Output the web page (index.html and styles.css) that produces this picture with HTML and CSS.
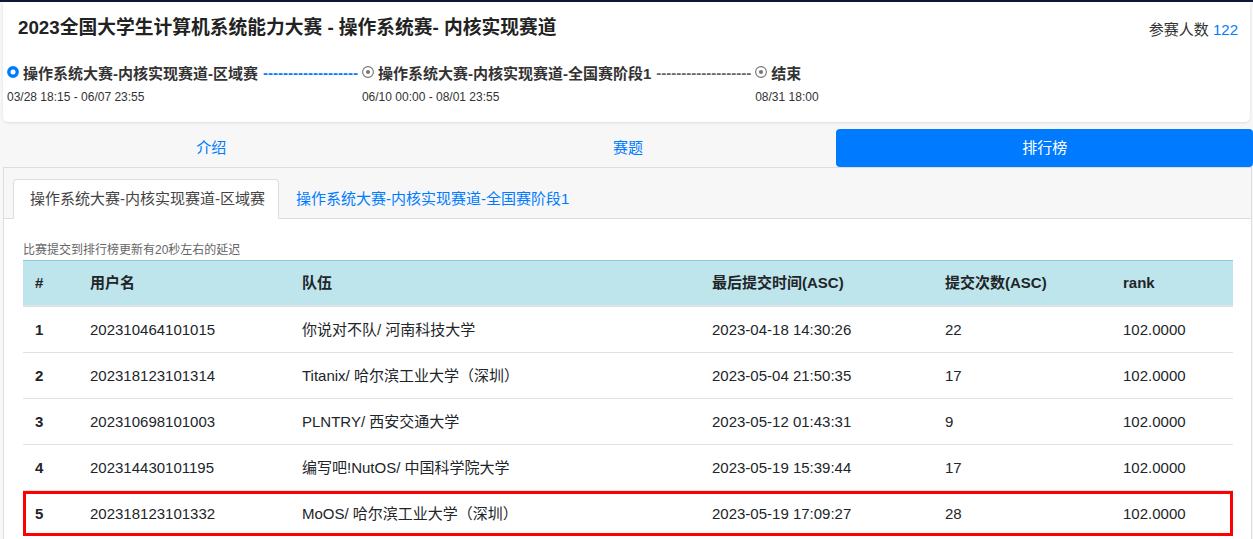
FILE: index.html
```html
<!DOCTYPE html>
<html lang="zh-CN">
<head>
<meta charset="utf-8">
<title>2023全国大学生计算机系统能力大赛</title>
<link rel="stylesheet" href="styles.css">
</head>
<body>
<div class="topbar"></div>
<div class="wrap">
  <div class="card">
    <div class="head">
      <h1 class="title">2023全国大学生计算机系统能力大赛 - 操作系统赛- 内核实现赛道</h1>
      <div class="count">参赛人数 <span class="num">122</span></div>
    </div>
    <div class="timeline">
      <div class="step">
        <div class="step-row">
          <svg class="dot" width="12" height="12" viewBox="0 0 12 12"><circle cx="6" cy="6" r="4.2" fill="#fff" stroke="#007bff" stroke-width="3.4"/></svg>
          <span class="step-title">操作系统大赛-内核实现赛道-区域赛</span>
          <span class="dash dash-active">-------------------</span>
        </div>
        <div class="step-date">03/28 18:15 - 06/07 23:55</div>
      </div>
      <div class="step">
        <div class="step-row">
          <svg class="dot" width="12" height="12" viewBox="0 0 12 12"><circle cx="6" cy="6" r="5.4" fill="none" stroke="#777" stroke-width="1.1"/><circle cx="6" cy="6" r="2.1" fill="#777"/></svg>
          <span class="step-title">操作系统大赛-内核实现赛道-全国赛阶段1</span>
          <span class="dash">-------------------</span>
        </div>
        <div class="step-date">06/10 00:00 - 08/01 23:55</div>
      </div>
      <div class="step">
        <div class="step-row">
          <svg class="dot" width="12" height="12" viewBox="0 0 12 12"><circle cx="6" cy="6" r="5.4" fill="none" stroke="#777" stroke-width="1.1"/><circle cx="6" cy="6" r="2.1" fill="#777"/></svg>
          <span class="step-title">结束</span>
        </div>
        <div class="step-date">08/31 18:00</div>
      </div>
    </div>
  </div>

  <nav class="nav">
    <a class="nav-item">介绍</a>
    <a class="nav-item">赛题</a>
    <a class="nav-item active">排行榜</a>
  </nav>

  <div class="panel">
    <div class="tabs">
      <a class="tab active">操作系统大赛-内核实现赛道-区域赛</a>
      <a class="tab">操作系统大赛-内核实现赛道-全国赛阶段1</a>
    </div>
    <div class="content">
      <div class="notice">比赛提交到排行榜更新有20秒左右的延迟</div>
      <table class="rank">
        <colgroup>
          <col class="c1"><col class="c2"><col class="c3"><col class="c4"><col class="c5"><col class="c6">
        </colgroup>
        <thead>
          <tr><th>#</th><th>用户名</th><th>队伍</th><th>最后提交时间(ASC)</th><th>提交次数(ASC)</th><th>rank</th></tr>
        </thead>
        <tbody>
          <tr><th>1</th><td>202310464101015</td><td>你说对不队/ 河南科技大学</td><td>2023-04-18 14:30:26</td><td>22</td><td>102.0000</td></tr>
          <tr><th>2</th><td>202318123101314</td><td>Titanix/ 哈尔滨工业大学（深圳）</td><td>2023-05-04 21:50:35</td><td>17</td><td>102.0000</td></tr>
          <tr><th>3</th><td>202310698101003</td><td>PLNTRY/ 西安交通大学</td><td>2023-05-12 01:43:31</td><td>9</td><td>102.0000</td></tr>
          <tr><th>4</th><td>202314430101195</td><td>编写吧!NutOS/ 中国科学院大学</td><td>2023-05-19 15:39:44</td><td>17</td><td>102.0000</td></tr>
          <tr class="mark"><th>5</th><td>202318123101332</td><td>MoOS/ 哈尔滨工业大学（深圳）</td><td>2023-05-19 17:09:27</td><td>28</td><td>102.0000</td></tr>
        </tbody>
      </table>
    </div>
  </div>
</div>
</body>
</html>
```

FILE: styles.css
```css
* { box-sizing: border-box; }
html, body { margin: 0; padding: 0; }
body {
  background: #f7f7f7;
  font-family: "Liberation Sans", "Noto Sans CJK SC", sans-serif;
  color: #212529;
  overflow: hidden;
}
.topbar { height: 2px; background: #10173a; }
.wrap { padding-left: 3px; }

.card {
  margin-right: 3px;
  background: #fff;
  border-radius: 0 0 5px 5px;
  box-shadow: 0 1px 3px rgba(0,0,0,0.10);
  padding: 14px 12px 17px 4px;
}
.head {
  display: flex;
  justify-content: space-between;
  align-items: center;
  height: 24px;
}
.title {
  margin: 0 0 0 11px;
  font-size: 18.75px;
  line-height: 24px;
  font-weight: bold;
  color: #222;
}
.count { font-size: 15px; color: #333; }
.count .num { color: #007bff; }

.timeline { display: flex; margin-top: 22px; }
.step { display: flex; flex-direction: column; }
.step-row { display: flex; align-items: center; height: 20px; }
.dot { flex: none; margin-right: 4px; }
.step-title { font-size: 15px; font-weight: bold; color: #333; white-space: nowrap; }
.dash { font-size: 15px; font-weight: bold; color: #666; margin: 0 4px 0 5px; white-space: nowrap; }
.dash-active { color: #007bff; }
.step-date { font-size: 12px; line-height: 16px; margin-top: 7px; color: #333; }

.nav { display: flex; margin-top: 7px; height: 38px; }
.nav-item {
  flex: 1;
  text-align: center;
  line-height: 38px;
  font-size: 15px;
  color: #007bff;
  border-radius: 4px;
}
.nav-item.active { background: #007bff; color: #fff; }

.panel {
  margin-right: 1px;
  border: 1px solid #ddd;
  background: #f7f7f7;
  padding-top: 11px;
}
.tabs {
  display: flex;
  padding-left: 9px;
  border-bottom: 1px solid #ddd;
}
.tab {
  font-size: 15px;
  line-height: 38px;
  padding: 0 13px 0 16px;
  border: 1px solid transparent;
  border-radius: 4px 4px 0 0;
  margin-bottom: -1px;
  color: #007bff;
  white-space: nowrap;
}
.tab.active { background: #fff; border-color: #ddd #ddd #fff; color: #444; }

.content { background: #fff; padding: 23px 17px 20px 19px; }
.notice { font-size: 12px; line-height: 17px; color: #666; margin-bottom: 1px; }

.rank {
  width: 1210px;
  border-collapse: collapse;
  table-layout: fixed;
  font-size: 15px;
}
.c1 { width: 55px; } .c2 { width: 212px; } .c3 { width: 410px; }
.c4 { width: 233px; } .c5 { width: 178px; } .c6 { width: 122px; }
.rank thead th {
  background: #bee5eb;
  border-top: 1px solid #86cfda;
  border-bottom: 2px solid #dee2e6;
  text-align: left;
  font-weight: bold;
  padding: 11px 12px;
  line-height: 22px;
}
.rank tbody th, .rank tbody td {
  border-top: 1px solid #dee2e6;
  padding: 11px 12px;
  line-height: 23px;
  text-align: left;
  white-space: nowrap;
}
.rank tbody th { font-weight: bold; }
.rank tbody td { font-weight: normal; }
.rank tr.mark { outline: 3px solid #f00; outline-offset: -3px; }
```
